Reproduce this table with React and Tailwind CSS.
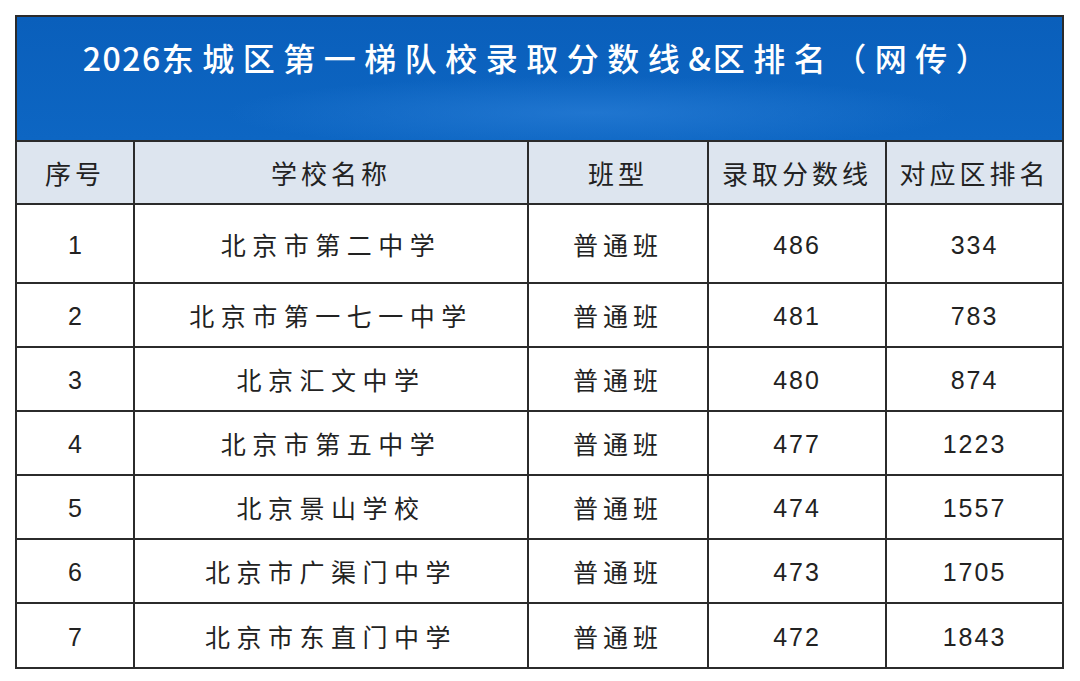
import React from "react";

const rows = [
  ["1", "北京市第二中学", "普通班", "486", "334"],
  ["2", "北京市第一七一中学", "普通班", "481", "783"],
  ["3", "北京汇文中学", "普通班", "480", "874"],
  ["4", "北京市第五中学", "普通班", "477", "1223"],
  ["5", "北京景山学校", "普通班", "474", "1557"],
  ["6", "北京市广渠门中学", "普通班", "473", "1705"],
  ["7", "北京市东直门中学", "普通班", "472", "1843"],
];

const cjk = { fontFamily: '"Noto Sans CJK SC", "Noto Sans", sans-serif' };
const num = { fontFamily: '"Liberation Sans", Arial, sans-serif' };

export default function App() {
  return (
    <div className="w-[1080px] h-[681px] bg-white pl-[15px] pt-[15px]">
      <div className="w-[1049px] border-2 border-[#2b2b2b]">
        {/* banner */}
        <div
          className="h-[125px] pt-[16px] text-center text-white font-medium text-[32px] leading-[48px] border-b-2 border-[#2b2b2b]"
          style={{
            ...cjk,
            background:
              "radial-gradient(ellipse 35% 30% at 55% 78%, rgba(40,125,214,0.7) 0%, rgba(20,110,205,0) 100%), linear-gradient(180deg, #0a5fbb 0%, #0d66c3 100%)",
          }}
        >
          <span className="tracking-[1.5px]">2026</span>
          <span className="tracking-[8.5px]">东城区第一梯队校录取分数线</span>
          <span className="tracking-[2px]">&amp;</span>
          <span className="tracking-[8.5px]">区排名（网传）</span>
        </div>

        <table className="w-full border-collapse table-fixed text-[#222]">
          <colgroup>
            <col className="w-[117px]" />
            <col className="w-[394px]" />
            <col className="w-[180px]" />
            <col className="w-[178px]" />
            <col />
          </colgroup>
          <thead>
            <tr className="h-[62px] bg-[#dde5ef]">
              {["序号", "学校名称", "班型", "录取分数线", "对应区排名"].map((h, i) => (
                <th
                  key={h}
                  className={`font-normal text-[26px] tracking-[4px] text-center ${i > 0 ? "border-l-2 border-[#2b2b2b]" : ""}`}
                  style={cjk}
                >
                  {h}
                </th>
              ))}
            </tr>
          </thead>
          <tbody>
            {rows.map((r, ri) => (
              <tr
                key={r[0]}
                className={`${ri === 0 ? "h-[79px]" : "h-[64px]"} border-t-2 border-[#2b2b2b]`}
              >
                <td className="text-center text-[25px] pt-[4px]" style={num}>
                  {r[0]}
                </td>
                <td className="text-center text-[25px] tracking-[6.5px] border-l-2 border-[#2b2b2b] pt-[2px]" style={cjk}>
                  {r[1]}
                </td>
                <td className="text-center text-[25px] tracking-[5px] border-l-2 border-[#2b2b2b] pt-[2px]" style={cjk}>
                  {r[2]}
                </td>
                <td className="text-center text-[25px] tracking-[2px] border-l-2 border-[#2b2b2b] pt-[4px]" style={num}>
                  {r[3]}
                </td>
                <td className="text-center text-[25px] tracking-[2px] border-l-2 border-[#2b2b2b] pt-[4px]" style={num}>
                  {r[4]}
                </td>
              </tr>
            ))}
          </tbody>
        </table>
      </div>
    </div>
  );
}
